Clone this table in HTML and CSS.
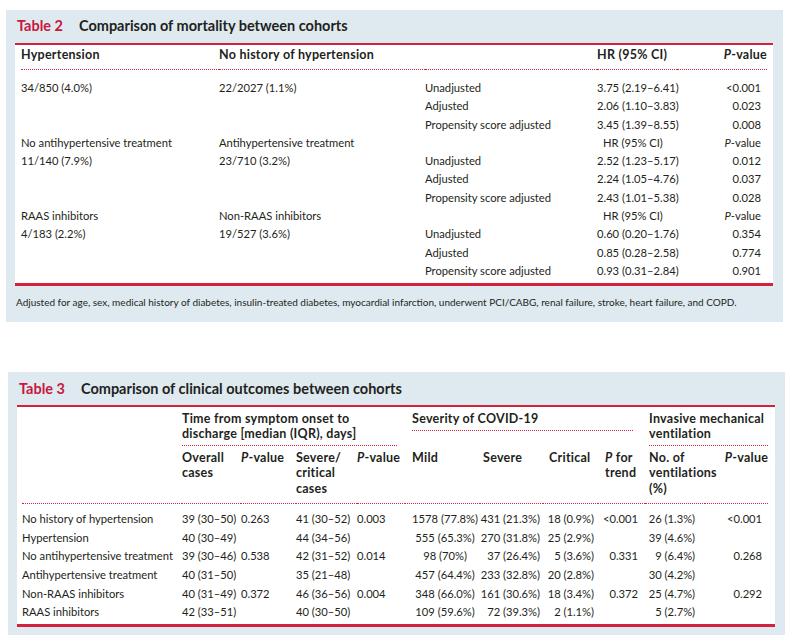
FILE: index.html
```html
<!DOCTYPE html>
<html>
<head>
<meta charset="utf-8">
<link rel="stylesheet" href="styles.css">
</head>
<body>
<div class="panel t2">
  <div class="title"><span class="num">Table 2</span><span class="cap">Comparison of mortality between cohorts</span></div>
  <div class="sheet">
    <table class="tbl2">
      <colgroup><col class="a"><col class="b"><col class="c"><col class="d"><col class="e"></colgroup>
      <thead>
        <tr><th>Hypertension</th><th>No history of hypertension</th><th></th><th>HR (95% CI)</th><th class="r"><i>P</i>-value</th></tr>
      </thead>
      <tbody>
        <tr><td>34/850 (4.0%)</td><td>22/2027 (1.1%)</td><td>Unadjusted</td><td>3.75 (2.19–6.41)</td><td class="r">&lt;0.001</td></tr>
        <tr><td></td><td></td><td>Adjusted</td><td>2.06 (1.10–3.83)</td><td class="r">0.023</td></tr>
        <tr><td></td><td></td><td>Propensity score adjusted</td><td>3.45 (1.39–8.55)</td><td class="r">0.008</td></tr>
        <tr><td>No antihypertensive treatment</td><td>Antihypertensive treatment</td><td></td><td class="hr">HR (95% CI)</td><td class="r"><i>P</i>-value</td></tr>
        <tr><td>11/140 (7.9%)</td><td>23/710 (3.2%)</td><td>Unadjusted</td><td>2.52 (1.23–5.17)</td><td class="r">0.012</td></tr>
        <tr><td></td><td></td><td>Adjusted</td><td>2.24 (1.05–4.76)</td><td class="r">0.037</td></tr>
        <tr><td></td><td></td><td>Propensity score adjusted</td><td>2.43 (1.01–5.38)</td><td class="r">0.028</td></tr>
        <tr><td>RAAS inhibitors</td><td>Non-RAAS inhibitors</td><td></td><td class="hr">HR (95% CI)</td><td class="r"><i>P</i>-value</td></tr>
        <tr><td>4/183 (2.2%)</td><td>19/527 (3.6%)</td><td>Unadjusted</td><td>0.60 (0.20–1.76)</td><td class="r">0.354</td></tr>
        <tr><td></td><td></td><td>Adjusted</td><td>0.85 (0.28–2.58)</td><td class="r">0.774</td></tr>
        <tr><td></td><td></td><td>Propensity score adjusted</td><td>0.93 (0.31–2.84)</td><td class="r">0.901</td></tr>
      </tbody>
    </table>
  </div>
  <div class="foot">Adjusted for age, sex, medical history of diabetes, insulin-treated diabetes, myocardial infarction, underwent PCI/CABG, renal failure, stroke, heart failure, and COPD.</div>
</div>

<div class="panel t3">
  <div class="title"><span class="num">Table 3</span><span class="cap">Comparison of clinical outcomes between cohorts</span></div>
  <div class="sheet">
    <table class="tbl3">
      <colgroup>
        <col class="k0"><col class="k1"><col class="k2"><col class="k3"><col class="k4"><col class="k5"><col class="k6"><col class="k7"><col class="k8"><col class="k9"><col class="k10">
      </colgroup>
      <thead>
        <tr class="g">
          <th rowspan="2" class="lab"></th>
          <th colspan="4"><div class="grp g1">Time from symptom onset to<br>discharge [median (IQR), days]</div></th>
          <th colspan="4" class="gs"><div class="grp g2">Severity of COVID-19</div></th>
          <th colspan="2" class="gv"><div class="grp">Invasive mechanical<br>ventilation</div></th>
        </tr>
        <tr class="s">
          <th>Overall<br>cases</th>
          <th><i>P</i>-value</th>
          <th>Severe/<br>critical<br>cases</th>
          <th><i>P</i>-value</th>
          <th class="pl7">Mild</th>
          <th class="pl3">Severe</th>
          <th class="pl6">Critical</th>
          <th class="pl7"><i>P</i> for<br>trend</th>
          <th class="pl4">No. of<br>ventilations<br>(%)</th>
          <th class="r"><i>P</i>-value</th>
        </tr>
      </thead>
      <tbody>
        <tr><td class="lab">No history of hypertension</td><td>39 (30–50)</td><td>0.263</td><td>41 (30–52)</td><td>0.003</td><td class="m">1578 (77.8%)</td><td class="r3">431 (21.3%)</td><td class="r4">18 (0.9%)</td><td class="r7">&lt;0.001</td><td class="r10">26 (1.3%)</td><td class="r6">&lt;0.001</td></tr>
        <tr><td class="lab">Hypertension</td><td>40 (30–49)</td><td></td><td>44 (34–56)</td><td></td><td class="m">555 (65.3%)</td><td class="r3">270 (31.8%)</td><td class="r4">25 (2.9%)</td><td class="r7"></td><td class="r10">39 (4.6%)</td><td class="r6"></td></tr>
        <tr><td class="lab">No antihypertensive treatment</td><td>39 (30–46)</td><td>0.538</td><td>42 (31–52)</td><td>0.014</td><td class="m">98 (70%)</td><td class="r3">37 (26.4%)</td><td class="r4">5 (3.6%)</td><td class="r7">0.331</td><td class="r10">9 (6.4%)</td><td class="r6">0.268</td></tr>
        <tr><td class="lab">Antihypertensive treatment</td><td>40 (31–50)</td><td></td><td>35 (21–48)</td><td></td><td class="m">457 (64.4%)</td><td class="r3">233 (32.8%)</td><td class="r4">20 (2.8%)</td><td class="r7"></td><td class="r10">30 (4.2%)</td><td class="r6"></td></tr>
        <tr><td class="lab">Non-RAAS inhibitors</td><td>40 (31–49)</td><td>0.372</td><td>46 (36–56)</td><td>0.004</td><td class="m">348 (66.0%)</td><td class="r3">161 (30.6%)</td><td class="r4">18 (3.4%)</td><td class="r7">0.372</td><td class="r10">25 (4.7%)</td><td class="r6">0.292</td></tr>
        <tr><td class="lab">RAAS inhibitors</td><td>42 (33–51)</td><td></td><td>40 (30–50)</td><td></td><td class="m">109 (59.6%)</td><td class="r3">72 (39.3%)</td><td class="r4">2 (1.1%)</td><td class="r7"></td><td class="r10">5 (2.7%)</td><td class="r6"></td></tr>
      </tbody>
    </table>
  </div>
</div>
</body>
</html>
```
FILE: styles.css
```css
html, body { margin: 0; padding: 0; background: #fff; }
body {
  font-family: Lato, "Open Sans", sans-serif;
  color: #231f20;
  font-size: 11.2px;
}
.panel { background: #deeaf0; box-sizing: border-box; width: 777px; }
.t2 { margin: 10px 0 0 6px; padding-bottom: 14px; }
.t3 { margin: 50px 0 0 8px; padding-bottom: 8px; }
.title {
  font-weight: 700;
  font-size: 14.5px;
  line-height: 18px;
  padding: 7px 0 8px 11px;
  display: flex;
  gap: 16px;
}
.t3 .title { padding-top: 8px; padding-bottom: 7px; }
.title .num { color: #c8183f; }
.sheet {
  background: #fff;
  margin: 0 10px 0 9px;
  border-top: 2px solid #d4213d;
  border-bottom: 3px solid #d4213d;
}
table { border-collapse: collapse; table-layout: fixed; }
th, td { padding: 0; text-align: left; white-space: nowrap; vertical-align: top; }
th { font-weight: 700; font-size: 12.5px; letter-spacing: 0.25px; }
.r { text-align: right; }

/* table 2 */
.tbl2 { width: 746px; margin-left: 6px; }
.tbl2 col.a { width: 198px; }
.tbl2 col.b { width: 206px; }
.tbl2 col.c { width: 172px; }
.tbl2 col.d { width: 80px; }
.tbl2 col.e { width: 90px; }
.tbl2 thead th {
  line-height: 18px;
  padding: 1px 0 5px;
  border-bottom: 1px dotted #d4213d;
}
.tbl2 td { line-height: 18.3px; }
.tbl2 td.r { padding-right: 6px; }
.tbl2 td.hr { padding-left: 6px; }
.tbl2 tbody tr:first-child td { padding-top: 9px; }
.tbl2 tbody tr:last-child td { padding-bottom: 3px; }
.foot {
  font-size: 10px;
  line-height: 12px;
  padding: 10px 0 0 10px;
}

/* table 3 */
.tbl3 { width: 746px; margin-left: 5px; }
.tbl3 .k0 { width: 160px; }
.tbl3 .k1 { width: 59px; }
.tbl3 .k2 { width: 55px; }
.tbl3 .k3 { width: 61px; }
.tbl3 .k4 { width: 48px; }
.tbl3 .k5 { width: 75px; }
.tbl3 .k6 { width: 63px; }
.tbl3 .k7 { width: 55px; }
.tbl3 .k8 { width: 47px; }
.tbl3 .k9 { width: 60px; }
.tbl3 .k10 { width: 63px; }
.tbl3 tr.g th { line-height: 15px; padding-top: 3.5px; }
.tbl3 th.lab { border-bottom: 1px dotted #d4213d; }
.grp { border-bottom: 1px dotted #d4213d; padding-bottom: 4px; }
.g1 { margin-right: 8px; }
.gs { padding-left: 7px; }
.g2 { margin-right: 12px; }
.gv { padding-left: 4px; }
.tbl3 tr.s th {
  line-height: 15.5px;
  padding-top: 4px;
  padding-bottom: 7px;
  border-bottom: 1px dotted #d4213d;
}
.tbl3 tr.s th.pl7 { padding-left: 7px; }
.tbl3 tr.s th.pl3 { padding-left: 3px; }
.tbl3 tr.s th.pl6 { padding-left: 6px; }
.tbl3 tr.s th.pl4 { padding-left: 4px; }
.tbl3 td { line-height: 18.6px; }
.tbl3 tbody tr:first-child td { padding-top: 6px; }
.tbl3 tbody tr:last-child td { padding-bottom: 2.5px; }
.tbl3 td.m { text-align: center; padding-left: 5px; }
.tbl3 td.r3 { text-align: right; padding-right: 3px; }
.tbl3 td.r4 { text-align: right; padding-right: 4px; }
.tbl3 td.r7 { text-align: right; padding-right: 7px; }
.tbl3 td.r10 { text-align: right; padding-right: 10px; }
.tbl3 td.r6 { text-align: right; padding-right: 6px; }
```
